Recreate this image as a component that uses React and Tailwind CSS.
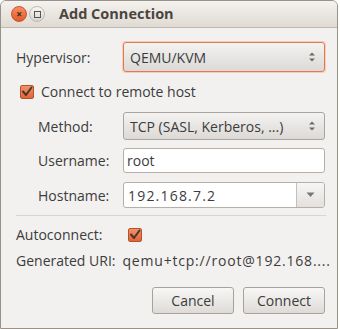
import React from "react";

const font = { fontFamily: '"Open Sans", "Noto Sans", sans-serif' };

function Check({ className = "" }) {
  return (
    <div className={"relative w-[14px] h-[14px] rounded-[2px] border border-[#b0542c] bg-gradient-to-b from-[#f3906a] to-[#de6538] " + className}>
      <svg width="14" height="14" viewBox="0 0 14 14" className="absolute left-[-1px] top-[-1px]">
        <path d="M3 6.5 L6 10 L11.5 2.5" fill="none" stroke="#4a342a" strokeWidth="2" strokeLinecap="round" strokeLinejoin="round" />
      </svg>
    </div>
  );
}

function UpDown() {
  return (
    <svg width="8" height="12" viewBox="0 0 8 12">
      <path d="M1 4.5 L4 1.5 L7 4.5 Z" fill="#6d6a66" />
      <path d="M1 7.5 L4 10.5 L7 7.5 Z" fill="#6d6a66" />
    </svg>
  );
}

function Combo({ text, focused, h }) {
  return (
    <div
      className={
        "flex items-center w-[202px] rounded-[3px] pl-[6px] pr-[8px] bg-gradient-to-b from-[#f4f3f2] to-[#dcd9d6] " +
        (focused
          ? "border border-[#e27a4d] shadow-[0_0_0_1px_rgba(240,140,100,0.35)]"
          : "border border-[#aaa49e]") +
        " " + h
      }
    >
      <span className="flex-1 text-[14px] text-[#3c3c3c] whitespace-nowrap">{text}</span>
      <UpDown />
    </div>
  );
}

export default function App() {
  return (
    <div className="w-[340px] h-[329px] bg-white" style={font}>
      <div className="w-[338px] h-[329px] border border-[#9a9189] rounded-t-[6px] bg-[#f2f1f0] flex flex-col overflow-hidden">
        {/* title bar */}
        <div className="h-[27px] flex items-center bg-gradient-to-b from-[#f4f2ef] to-[#dfdbd3] border-b border-[#c0b8ae] pl-[10px]">
          <div className="w-[16px] h-[16px] rounded-full bg-gradient-to-b from-[#f68d62] to-[#e05a27] border border-[#c9532a] flex items-center justify-center">
            <span className="text-[10px] leading-none text-[#3a2a22] font-bold">×</span>
          </div>
          <div className="ml-[2px] w-[16px] h-[16px] rounded-full bg-gradient-to-b from-[#f7f6f4] to-[#d9d6d1] border border-[#bdb8b1] flex items-center justify-center">
            <div className="w-[7px] h-[7px] border border-[#555]" />
          </div>
          <span className="ml-[14px] text-[14.5px] font-bold text-[#4a4540]">Add Connection</span>
        </div>

        <div className="flex flex-col pl-[15px] text-[14px] text-[#3c3c3c]">
          {/* Hypervisor */}
          <div className="flex items-center mt-[14px]">
            <span className="w-[107px]">Hypervisor:</span>
            <Combo text="QEMU/KVM" focused h="h-[30px]" />
          </div>
          {/* remote */}
          <div className="flex items-center mt-[9px] pl-[4px]">
            <Check />
            <span className="ml-[7px]">Connect to remote host</span>
          </div>
          {/* Method */}
          <div className="flex items-center mt-[10px]">
            <span className="w-[107px] pl-[22px]">Method:</span>
            <Combo text="TCP (SASL, Kerberos, ...)" h="h-[28px]" />
          </div>
          {/* Username */}
          <div className="flex items-center mt-[8px]">
            <span className="w-[107px] pl-[22px]">Username:</span>
            <div className="w-[202px] h-[25px] bg-white border border-[#b5afa8] rounded-[3px] flex items-center pl-[3px]">root</div>
          </div>
          {/* Hostname */}
          <div className="flex items-center mt-[9px]">
            <span className="w-[107px] pl-[22px]">Hostname:</span>
            <div className="w-[202px] h-[26px] bg-white border border-[#b5afa8] rounded-[3px] flex overflow-hidden">
              <span className="flex-1 flex items-center pl-[4px] tracking-[1.2px]">192.168.7.2</span>
              <div className="w-[28px] border-l border-[#c4bfb9] bg-gradient-to-b from-[#f7f6f5] to-[#e3e0dd] flex items-center justify-center">
                <svg width="9" height="6" viewBox="0 0 9 6"><path d="M0.5 0.5 L8.5 0.5 L4.5 5 Z" fill="#7a7773" /></svg>
              </div>
            </div>
          </div>
          {/* separator */}
          <div className="mt-[7px] w-[310px] h-[1px] bg-[#d9d5d0]" />
          {/* Autoconnect */}
          <div className="flex items-center mt-[8px]">
            <span className="w-[112px]">Autoconnect:</span>
            <Check />
          </div>
          {/* URI */}
          <div className="flex items-center mt-[5px] whitespace-nowrap">
            <span>Generated URI:</span>
            <span className="ml-[7px] tracking-[0.8px]">qemu+tcp://root@192.168....</span>
          </div>
          {/* buttons */}
          <div className="flex justify-end mt-[16px] pr-[12px] gap-[9px]">
            <button className="w-[82px] h-[27px] rounded-[3px] border border-[#a8a29c] bg-gradient-to-b from-[#f8f7f6] to-[#dedbd7] text-[14px] text-[#3c3c3c]">Cancel</button>
            <button className="w-[82px] h-[27px] rounded-[3px] border border-[#a8a29c] bg-gradient-to-b from-[#f8f7f6] to-[#dedbd7] text-[14px] text-[#3c3c3c]">Connect</button>
          </div>
        </div>
      </div>
    </div>
  );
}
